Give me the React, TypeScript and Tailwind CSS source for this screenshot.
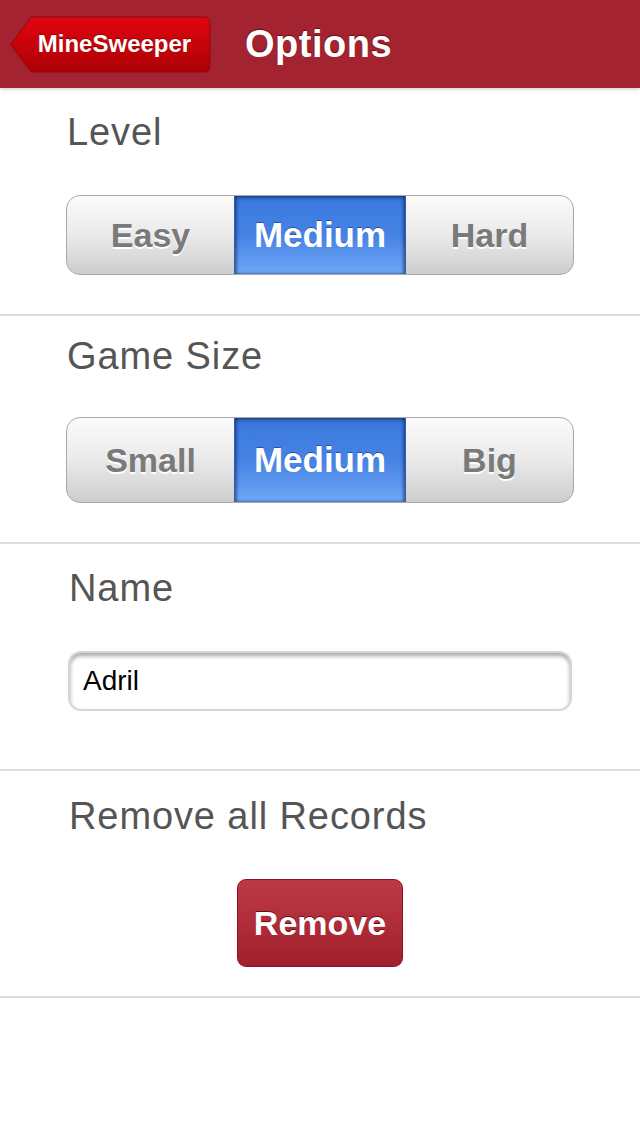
import { useState } from "react";

function Segmented({ items, height }: { items: string[]; height: string }) {
  const [active, setActive] = useState(1);
  return (
    <div
      className={`mx-[66px] flex ${height} overflow-hidden rounded-[14px] border border-[#a9a9a9] bg-gradient-to-b from-[#fbfbfb] via-[#eaeaea] to-[#cdcdcd]`}
    >
      {items.map((item, i) => (
        <button
          key={item}
          onClick={() => setActive(i)}
          className={
            i === active
              ? "w-[172px] border-x border-[#2b5fb5] bg-gradient-to-b from-[#3b78de] via-[#4583e4] to-[#6ea7f5] text-[35px] font-bold text-white shadow-[inset_0_2px_4px_rgba(0,0,40,0.35),inset_2px_0_3px_rgba(0,0,60,0.3),inset_-2px_0_3px_rgba(0,0,60,0.3)] [text-shadow:0_-1px_0_rgba(0,0,80,0.4)]"
              : "flex-1 text-[34px] font-bold text-[#7a7a7a] [text-shadow:0_2px_0_#ffffff]"
          }
        >
          {item}
        </button>
      ))}
    </div>
  );
}

export default function App() {
  return (
    <div className="h-[1136px] w-[640px] bg-white font-['Liberation_Sans',Arial,sans-serif]">
      <header className="flex h-[88px] items-center bg-[#a32331] shadow-[0_2px_3px_rgba(0,0,0,0.15)]">
        <div className="relative ml-[10px] h-[57px] w-[201px]">
          <svg width="201" height="57" viewBox="0 0 201 57" className="absolute inset-0">
            <defs>
              <linearGradient id="back" x1="0" y1="0" x2="0" y2="1">
                <stop offset="0" stopColor="#e00610" />
                <stop offset="1" stopColor="#ad0005" />
              </linearGradient>
            </defs>
            <path
              d="M0.5 28.5 L21 1 H194 Q200 1 200 7 V50 Q200 56 194 56 H21 Z"
              fill="url(#back)"
              stroke="#8c0a10"
              strokeWidth="1"
            />
          </svg>
          <span className="absolute inset-0 flex items-center justify-center pl-[8px] text-[24px] font-bold text-white [text-shadow:0_-1px_0_rgba(80,0,0,0.5)]">
            MineSweeper
          </span>
        </div>
        <h1 className="ml-[34px] text-[38px] font-bold tracking-[0.5px] text-white [text-shadow:0_-1px_1px_rgba(60,0,0,0.6)]">
          Options
        </h1>
      </header>

      <section className="border-b-2 border-[#dedede] pt-[24px] pb-[39px]">
        <h2 className="ml-[67px] text-[38px] leading-[40px] tracking-[0.9px] text-[#555]">Level</h2>
        <div className="mt-[43px]">
          <Segmented items={["Easy", "Medium", "Hard"]} height="h-[80px]" />
        </div>
      </section>

      <section className="border-b-2 border-[#dedede] pt-[20px] pb-[39px]">
        <h2 className="ml-[67px] text-[38px] leading-[40px] tracking-[0.9px] text-[#555]">Game Size</h2>
        <div className="mt-[41px]">
          <Segmented items={["Small", "Medium", "Big"]} height="h-[86px]" />
        </div>
      </section>

      <section className="border-b-2 border-[#dedede] pt-[24px] pb-[58px]">
        <h2 className="ml-[69px] text-[38px] leading-[40px] tracking-[0.9px] text-[#555]">Name</h2>
        <div className="mx-[68px] mt-[43px] flex h-[60px] items-center rounded-[13px] border-2 border-[#d6d6d6] bg-white px-[13px] shadow-[inset_0_3px_4px_rgba(0,0,0,0.35)]">
          <input
            defaultValue="Adril"
            className="w-full bg-transparent text-[28px] text-black outline-none"
          />
        </div>
      </section>

      <section className="border-b-2 border-[#dedede] pt-[25px] pb-[29px]">
        <h2 className="ml-[69px] text-[38px] leading-[40px] tracking-[0.9px] text-[#555]">Remove all Records</h2>
        <div className="mt-[43px] flex justify-center">
          <button className="h-[88px] w-[166px] rounded-[9px] border border-[#8e1320] bg-gradient-to-b from-[#bd3946] to-[#a11e2b] text-[34px] font-bold text-white [text-shadow:0_-1px_0_rgba(70,0,0,0.7)]">
            Remove
          </button>
        </div>
      </section>
    </div>
  );
}
